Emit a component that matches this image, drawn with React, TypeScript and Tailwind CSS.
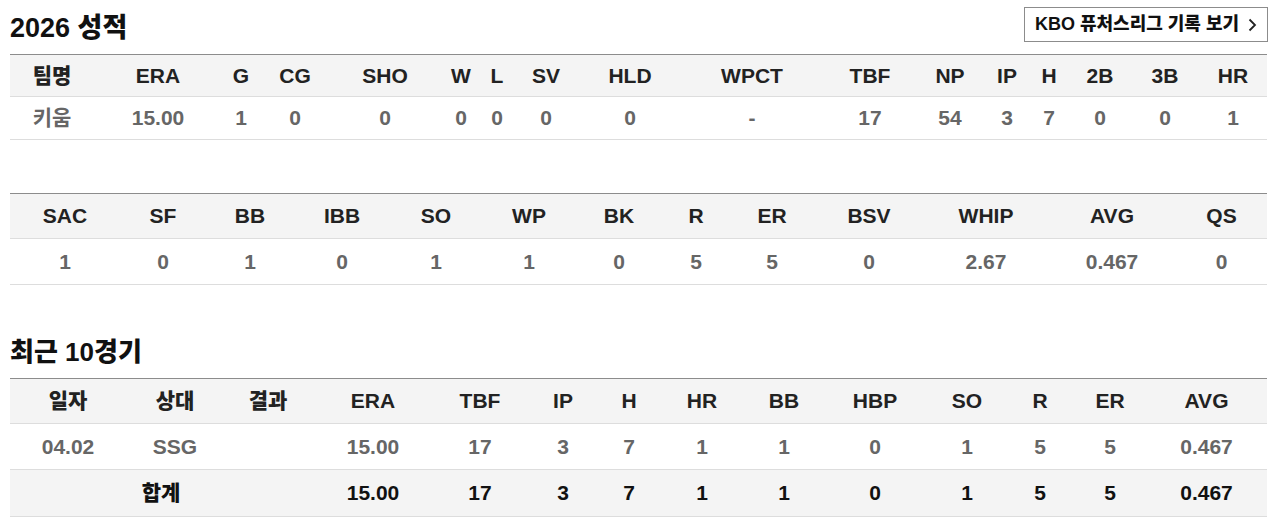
const FONT = "font-['Liberation_Sans','Noto_Sans_CJK_KR',sans-serif]";

const summaryCols =
  'grid-cols-[84px_128px_38px_70px_110px_42px_30px_68px_100px_144px_92px_68px_46px_38px_64px_66px_70px]';
const detailCols =
  'grid-cols-[110px_86px_88px_96px_92px_94px_86px_68px_84px_110px_124px_128px_91px]';
const gameCols =
  'grid-cols-[116px_98px_88px_122px_92px_74px_58px_88px_76px_106px_78px_68px_72px_121px]';

const summaryHead = ['팀명', 'ERA', 'G', 'CG', 'SHO', 'W', 'L', 'SV', 'HLD', 'WPCT', 'TBF', 'NP', 'IP', 'H', '2B', '3B', 'HR'];
const summaryRow = ['키움', '15.00', '1', '0', '0', '0', '0', '0', '0', '-', '17', '54', '3', '7', '0', '0', '1'];

const detailHead = ['SAC', 'SF', 'BB', 'IBB', 'SO', 'WP', 'BK', 'R', 'ER', 'BSV', 'WHIP', 'AVG', 'QS'];
const detailRow = ['1', '0', '1', '0', '1', '1', '0', '5', '5', '0', '2.67', '0.467', '0'];

const gameHead = ['일자', '상대', '결과', 'ERA', 'TBF', 'IP', 'H', 'HR', 'BB', 'HBP', 'SO', 'R', 'ER', 'AVG'];
const gameRow = ['04.02', 'SSG', '', '15.00', '17', '3', '7', '1', '1', '0', '1', '5', '5', '0.467'];
const totalRow = ['15.00', '17', '3', '7', '1', '1', '0', '1', '5', '5', '0.467'];

function Cell({ children }: { children?: React.ReactNode }) {
  return <div className="flex items-center justify-center">{children}</div>;
}

function StatTable({
  cols,
  head,
  row,
  headH,
  rowH,
}: {
  cols: string;
  head: string[];
  row: string[];
  headH: string;
  rowH: string;
}) {
  return (
    <div className="border-t border-[#8c8c8c]">
      <div className={`grid ${cols} ${headH} bg-[#f4f4f4] border-b border-[#dddddd] text-[21px] font-black text-[#222]`}>
        {head.map((h) => (
          <Cell key={h}>{h}</Cell>
        ))}
      </div>
      <div className={`grid ${cols} ${rowH} border-b border-[#dddddd] text-[21px] font-bold text-[#666]`}>
        {row.map((v, i) => (
          <Cell key={i}>{v}</Cell>
        ))}
      </div>
    </div>
  );
}

export default function App() {
  return (
    <div className={`${FONT} bg-white w-[1270px] h-[521px] overflow-hidden`}>
      <div className="ml-[10px] w-[1257px] pt-[7px]">
        {/* Season header */}
        <div className="flex justify-between items-start h-[47px]">
          <h2 className="text-[27px] leading-[30px] font-black text-[#111] mt-[6px]">2026 성적</h2>
          <button className="h-[35px] w-[244px] border border-[#8c8c8c] flex items-center justify-center gap-[9px] text-[18px] font-black text-[#111] bg-white mr-[-1px]">
            KBO 퓨처스리그 기록 보기
            <svg className="w-[9px] h-[14px]" viewBox="0 0 9 14" fill="none" stroke="#222" strokeWidth={1.8}>
              <path d="M1.5 1.5L7 7L1.5 12.5" />
            </svg>
          </button>
        </div>

        <StatTable cols={summaryCols} head={summaryHead} row={summaryRow} headH="h-[42px]" rowH="h-[43px]" />

        <div className="mt-[53px]">
          <StatTable cols={detailCols} head={detailHead} row={detailRow} headH="h-[45px]" rowH="h-[46px]" />
        </div>

        {/* Recent games */}
        <h2 className="mt-[52px] mb-[11px] text-[26px] leading-[30px] font-black text-[#111]">최근 10경기</h2>
        <div className="border-t border-[#8c8c8c]">
          <div className={`grid ${gameCols} h-[45px] bg-[#f4f4f4] border-b border-[#dddddd] text-[21px] font-black text-[#222]`}>
            {gameHead.map((h) => (
              <Cell key={h}>{h}</Cell>
            ))}
          </div>
          <div className={`grid ${gameCols} h-[46px] border-b border-[#dddddd] text-[21px] font-bold text-[#666]`}>
            {gameRow.map((v, i) => (
              <Cell key={i}>{v}</Cell>
            ))}
          </div>
          <div className={`grid ${gameCols} h-[47px] bg-[#f4f4f4] border-b border-[#dddddd] text-[21px] font-black text-[#111]`}>
            <div className="col-span-3 flex items-center justify-center">합계</div>
            {totalRow.map((v, i) => (
              <Cell key={i}>{v}</Cell>
            ))}
          </div>
        </div>
      </div>
    </div>
  );
}
